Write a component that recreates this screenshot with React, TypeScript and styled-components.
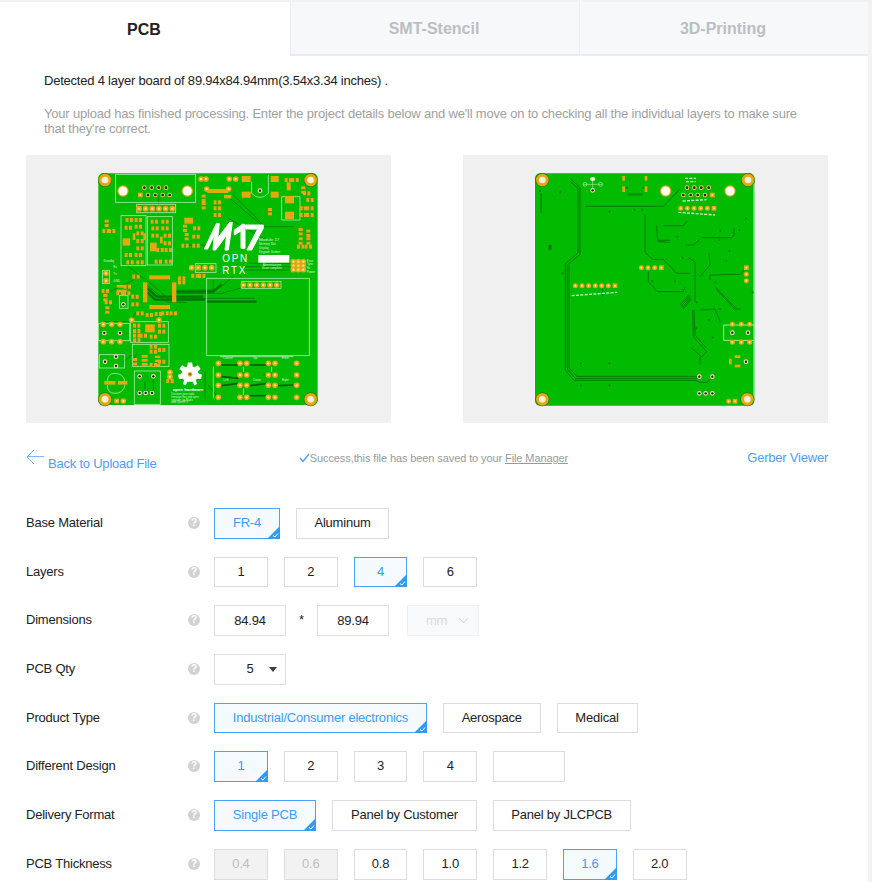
import React from "react";
import styled, { createGlobalStyle } from "styled-components";

const Global = createGlobalStyle`
  html, body { margin: 0; padding: 0; background: #f0f2f5; }
  body { font-family: "Liberation Sans", Arial, sans-serif; font-size: 13px; letter-spacing: -0.22px; color: #222; }
  * { box-sizing: border-box; }
`;

const Page = styled.div`
  width: 868px;
  height: 880px;
  margin-top: 2px;
  background: #fff;
  overflow: hidden;
`;
const Tabs = styled.div`
  display: flex;
  height: 54px;
`;
const Tab = styled.div<{ $active?: boolean; $w: number }>`
  width: ${(p) => p.$w}px;
  display: flex;
  align-items: center;
  justify-content: center;
  font-size: 16px;
  letter-spacing: 0;
  font-weight: 700;
  padding: 1px 2px 0 0;
  color: ${(p) => (p.$active ? "#222" : "#bbbec4")};
  background: ${(p) => (p.$active ? "#fff" : "#f6f8fa")};
  border-bottom: ${(p) => (p.$active ? "none" : "2px solid #e9ecef")};
  border-left: ${(p) => (p.$active ? "none" : "1px solid #eceef1")};
`;
const Intro = styled.div`
  padding: 17px 60px 0 44px;
`;
const Detected = styled.div`
  line-height: 16px;
  color: #222;
`;
const Note = styled.div`
  margin-top: 17px;
  line-height: 15px;
  letter-spacing: -0.195px;
  color: #a0a0a0;
`;
const Boards = styled.div`
  display: flex;
  justify-content: space-between;
  width: 802px;
  margin: 19px 0 0 26px;
`;
const BoardPanel = styled.div`
  width: 365px;
  height: 268px;
  background: #f0f0f0;
  display: flex;
  justify-content: center;
  align-items: flex-start;
`;
const BoardSvg = styled.svg<{ $shift: number }>`
  width: 235px;
  height: 245px;
  margin-top: 10px;
  margin-left: ${(p) => p.$shift}px;
  display: block;
  letter-spacing: 0;
`;
const Links = styled.div`
  display: flex;
  justify-content: space-between;
  align-items: flex-start;
  width: 802px;
  margin: 26px 0 0 26px;
  height: 59px;
`;
const BackLink = styled.div`
  display: flex;
  align-items: flex-start;
  gap: 4px;
  color: #4c9df3;
  line-height: 16px;
`;
const BackText = styled.span`
  margin-top: 7px;
`;
const Saved = styled.div`
  display: flex;
  align-items: center;
  margin: 2px 37px 0 0;
  font-size: 11px;
  letter-spacing: -0.1px;
  line-height: 14px;
  color: #999;
  white-space: pre;
`;
const FileLink = styled.span`
  text-decoration: underline;
`;
const Gerber = styled.div`
  margin-top: 1px;
  color: #4c9df3;
  line-height: 16px;
`;
const Form = styled.div`
  display: flex;
  flex-direction: column;
  gap: 18px;
  padding-left: 26px;
`;
const Row = styled.div`
  display: flex;
  align-items: flex-start;
  height: 30.7px;
`;
const Label = styled.div`
  width: 162px;
  line-height: 29px;
  color: #222;
`;
const Help = styled.div`
  width: 12px;
  height: 12px;
  margin: 9px 14px 0 0;
  border-radius: 50%;
  background: #d2d2d2;
  color: #fff;
  font-size: 10px;
  font-weight: 700;
  line-height: 12px;
  text-align: center;
  flex: none;
`;
const Options = styled.div`
  display: flex;
  gap: 16px;
  align-items: flex-start;
`;
const Option = styled.div<{ $w: number; $on?: boolean; $off?: boolean }>`
  position: relative;
  width: ${(p) => p.$w}px;
  height: 30.7px;
  display: flex;
  align-items: center;
  justify-content: center;
  padding-bottom: 2px;
  border: 1px solid ${(p) => (p.$on ? "#4aa3f8" : "#dcdcdc")};
  background: ${(p) => (p.$on ? "#f5faff" : p.$off ? "#f2f2f2" : "#fff")};
  color: ${(p) => (p.$on ? "#3a9df5" : p.$off ? "#bdbdbd" : "#222")};
`;
const Corner = styled.svg`
  position: absolute;
  right: -1px;
  bottom: -1px;
  width: 13px;
  height: 13px;
`;
const Field = styled.div`
  width: 72px;
  height: 30.7px;
  display: flex;
  align-items: center;
  justify-content: center;
  border: 1px solid #dcdfe6;
  color: #222;
`;
const Times = styled.div`
  width: 0;
  flex: none;
  margin-left: -3px;
  margin-right: 2px;
  padding-top: 7px;
  line-height: 16px;
  white-space: nowrap;
`;
const UnitSelect = styled.div`
  width: 72px;
  height: 30.7px;
  margin-left: 2px;
  display: flex;
  align-items: center;
  justify-content: space-between;
  padding: 0 9px 0 18px;
  background: #f8f9fb;
  border: 1px solid #eef0f3;
  color: #d8dade;
`;
const QtySelect = styled.div`
  position: relative;
  width: 72px;
  height: 30.7px;
  display: flex;
  align-items: center;
  justify-content: center;
  padding: 0 0 2px 0;
  border: 1px solid #dcdfe6;
  color: #222;
`;
const Caret = styled.div`
  position: absolute;
  right: 8px;
  top: 12px;
  width: 0;
  height: 0;
  border-left: 4px solid transparent;
  border-right: 4px solid transparent;
  border-top: 5px solid #3c3f4a;
`;

const SILK = "#a6eaa6";
const GOLD = "#e4a90f";
const TRACE = "#008a00";
const GREEN = "#00bb00";

type P = [number, number];
const Pad = ({ x, y, r = 8.5, dark }: { x: number; y: number; r?: number; dark?: boolean }) => (
  <g>
    <circle cx={x} cy={y} r={r} fill={GOLD} />
    <circle cx={x} cy={y} r={r * 0.42} fill={dark ? "#6d5200" : "#f3dfa0"} />
  </g>
);
const SqPad = ({ x, y, s = 14 }: { x: number; y: number; s?: number }) => (
  <g>
    <rect x={x - s / 2} y={y - s / 2} width={s} height={s} fill={GOLD} />
    <circle cx={x} cy={y} r={3} fill="#f3dfa0" />
  </g>
);
const Mount = ({ x, y }: { x: number; y: number }) => (
  <g>
    <circle cx={x} cy={y} r={21} fill="#1c7a10" />
    <circle cx={x} cy={y} r={19} fill={GOLD} />
    <circle cx={x} cy={y} r={10} fill="#f4f0dc" />
  </g>
);
const WhiteHole = ({ x, y, r = 17 }: { x: number; y: number; r?: number }) => (
  <g>
    <circle cx={x} cy={y} r={r} fill={GOLD} />
    <circle cx={x} cy={y} r={r - 3.5} fill="#fffdf5" />
  </g>
);
const Dot = ({ x, y }: { x: number; y: number }) => (
  <g>
    <circle cx={x} cy={y} r={7} fill="#f2c860" />
    <circle cx={x} cy={y} r={4} fill="#222" />
  </g>
);
const WDot = ({ x, y }: { x: number; y: number }) => (
  <g>
    <circle cx={x} cy={y} r={7} fill="#f2e2b0" />
    <circle cx={x} cy={y} r={3.5} fill="#1b1b1b" />
  </g>
);
const Traces = ({ lines, w = 2.5, c = TRACE }: { lines: string[]; w?: number; c?: string }) => (
  <g fill="none" stroke={c} strokeWidth={w}>
    {lines.map((d, i) => (
      <path key={i} d={d} />
    ))}
  </g>
);
const Silk = ({ rects }: { rects: number[][] }) => (
  <g fill="none" stroke={SILK} strokeWidth={2.5}>
    {rects.map((r, i) => (
      <rect key={i} x={r[0]} y={r[1]} width={r[2]} height={r[3]} />
    ))}
  </g>
);
const Bars = ({ items }: { items: number[][] }) => (
  <g fill={GOLD}>
    {items.map((r, i) => (
      <rect key={i} x={r[0]} y={r[1]} width={r[2]} height={r[3]} />
    ))}
  </g>
);
const Tiny = ({ items }: { items: [number, number, string, number?][] }) => (
  <g fill="#d9f7d9" fontFamily="Liberation Sans, sans-serif" fontSize={9}>
    {items.map((t, i) => (
      <text key={i} x={t[0]} y={t[1]} fontSize={t[3] ?? 9}>
        {t[2]}
      </text>
    ))}
  </g>
);
const Smd = ({ x, y, v }: { x: number; y: number; v?: boolean }) => (
  <g fill={GOLD}>
    {v ? (
      <>
        <rect x={x - 6} y={y - 11} width={12} height={9} />
        <rect x={x - 6} y={y + 2} width={12} height={9} />
        <rect x={x - 3} y={y - 2} width={6} height={4} fill="#7a7a40" />
      </>
    ) : (
      <>
        <rect x={x - 11} y={y - 6} width={9} height={12} />
        <rect x={x + 2} y={y - 6} width={9} height={12} />
        <rect x={x - 2} y={y - 3} width={4} height={6} fill="#7a7a40" />
      </>
    )}
  </g>
);

const gearPoints = (cx: number, cy: number, outer: number, inner: number, teeth: number) => {
  const out: string[] = [];
  for (let i = 0; i < teeth; i++) {
    const a = (i / teeth) * Math.PI * 2 - Math.PI / 2;
    const s = (Math.PI * 2) / teeth;
    [[-0.38, inner], [-0.2, outer], [0.2, outer], [0.38, inner]].forEach(([k, r]) => {
      out.push(`${cx + Math.cos(a + k * s) * r},${cy + Math.sin(a + k * s) * r}`);
    });
  }
  return out.join(" ");
};

const pads: P[] = [
  [147, 131], [167, 131], [187, 131], [207, 131], [227, 131], [247, 131],
  [348, 42], [418, 42], [437, 42], [333, 42], [350, 72], [416, 72],
  [305, 308], [325, 308], [345, 308], [365, 308],
  [460, 360], [480, 360], [500, 360], [520, 360], [540, 360], [560, 360],
  [48, 325], [48, 347], [125, 465], [207, 465],
  [385, 595], [450, 595], [470, 595], [535, 595], [555, 595], [620, 595],
  [385, 630], [450, 630], [470, 630], [535, 630], [555, 630], [620, 630],
  [385, 661], [450, 661], [470, 661], [535, 661], [555, 661], [620, 661],
  [385, 697], [450, 697], [470, 697], [535, 697], [555, 697], [620, 697],
  [40, 478], [65, 478], [90, 478], [40, 530], [65, 530], [90, 530],
  [100, 708], [240, 622], [240, 635],
  [610, 290], [610, 302], [610, 314], [625, 290], [625, 302], [625, 314],
  [640, 290], [640, 302], [640, 314],
];
const smds: [number, number, boolean?][] = [
  [118, 165], [145, 165], [115, 188], [145, 185], [150, 205], [150, 228], [150, 250], [115, 270], [145, 270], [150, 292], [120, 292],
  [193, 170], [225, 170], [195, 190], [225, 190], [195, 212], [232, 212], [232, 235], [210, 255], [235, 255], [205, 290], [235, 290],
  [50, 175, true], [48, 198], [65, 198], [285, 190, true], [320, 190], [290, 215, true], [318, 215], [318, 242], [285, 242],
  [632, 200, true], [655, 205, true], [632, 228, true], [655, 228, true], [632, 245], [655, 245], [650, 85], [660, 105], [640, 130], [660, 130], [640, 150], [660, 150],
  [382, 112], [382, 130], [382, 150], [341, 100, true], [341, 122, true], [615, 45], [595, 45], [640, 75, true],
  [46, 378], [46, 398, true], [55, 412], [52, 435, true], [112, 365], [90, 385], [110, 385], [135, 395], [135, 418], [138, 335], [275, 340], [275, 352],
  [150, 445], [178, 450], [225, 445], [250, 445], [205, 447], [315, 333], [335, 333],
  [140, 482], [140, 498], [140, 512], [140, 526], [160, 512], [190, 515], [215, 482], [215, 500], [190, 545], [190, 560], [215, 555], [190, 600], [215, 590], [135, 590, true],
  [240, 648], [540, 140, true],
];
const topBars: number[][] = [
  [178, 331, 62, 12], [159, 352, 13, 60], [246, 352, 13, 60], [178, 420, 62, 12],
  [352, 72, 62, 12], [455, 33, 27, 18], [542, 33, 24, 18], [455, 80, 27, 18], [542, 80, 24, 18],
  [585, 93, 27, 22], [585, 140, 27, 22], [590, 52, 12, 24], [630, 125, 26, 8],
  [98, 220, 22, 22], [180, 233, 20, 26], [283, 158, 26, 18], [166, 478, 28, 24],
  [43, 648, 33, 11], [84, 648, 28, 11], [155, 570, 18, 8], [155, 582, 18, 8], [155, 594, 18, 8],
  [195, 572, 16, 7], [195, 584, 16, 7], [195, 596, 16, 7], [402, 90, 22, 10],
  [128, 205, 8, 20], [160, 205, 8, 20], [210, 215, 8, 20], [80, 360, 30, 8], [80, 374, 30, 8],
];
const TopBoard = () => (
  <BoardSvg viewBox="0 0 705 735" $shift={-2} role="img" aria-label="PCB top layer">
    <rect x={25} y={25} width={658} height={695} rx={15} fill={GREEN} />
    <Traces
      w={3}
      lines={[
        "M420 100 L520 185 L610 185", "M170 345 L240 405 L300 405", "M170 360 L232 412 L290 412",
        "M260 375 L380 375 L430 335", "M260 385 L395 385 L450 370", "M260 400 L495 400", "M370 345 L370 380",
        "M290 240 L350 240 L375 200", "M40 470 L120 470", "M125 600 L140 565", "M345 620 L345 700",
        "M478 295 L610 295", "M465 305 L610 305", "M465 315 L610 315", "M165 650 L165 680", "M190 630 L190 680",
        "M520 630 L545 630", "M355 660 L385 700", "M415 160 L520 220", "M205 90 L205 120", "M430 90 L520 180",
        "M110 300 L160 340", "M60 380 L130 345", "M120 470 L140 440", "M100 590 L125 570", "M240 460 L260 430",
      ]}
    />
    <Traces
      w={7}
      c="#007600"
      lines={["M172 370 L200 395 L340 395", "M172 382 L195 404 L345 404", "M250 380 L370 380 L395 358", "M350 410 L500 410"]}
    />
    <Traces
      w={5}
      c="#0a5a0a"
      lines={["M395 600 L445 600", "M480 600 L530 600", "M395 635 L445 640", "M395 662 L445 655", "M480 662 L530 655", "M565 662 L610 660", "M480 692 L530 692"]}
    />
    <Silk
      rects={[
        [77, 28, 240, 84], [140, 118, 117, 25], [93, 152, 75, 150], [172, 155, 75, 145], [316, 296, 62, 26],
        [350, 340, 308, 232], [455, 349, 118, 21], [25, 475, 94, 52], [122, 470, 113, 62], [127, 538, 110, 66],
        [28, 569, 76, 40], [133, 618, 78, 100], [38, 316, 20, 40], [88, 392, 26, 38],
      ]}
    />
    <g fill="none" stroke={SILK} strokeWidth={2.5}>
      <path d="M52 650 Q52 625 75 625 Q100 625 105 650 M52 660 Q52 685 75 685 Q100 685 105 660" />
      <path d="M485 50 L485 85 Q510 110 535 85 L535 30" />
      <path d="M575 95 L630 95 L630 165 L575 165 Z" />
      <path d="M390 575 L610 575 M370 605 L370 700 M460 605 L460 620 M545 605 L545 620 M460 670 L460 690" />
    </g>
    <Bars items={topBars} />
    {smds.map((s, i) => (
      <Smd key={i} x={s[0]} y={s[1]} v={s[2]} />
    ))}
    {pads.map((p, i) => (
      <Pad key={i} x={p[0]} y={p[1]} />
    ))}
    <SqPad x={147} y={131} />
    <SqPad x={151} y={90} />
    <SqPad x={325} y={308} />
    <SqPad x={80} y={708} />
    <Dot x={174} y={90} /><Dot x={196} y={90} /><Dot x={218} y={90} /><Dot x={239} y={90} />
    <Dot x={163} y={68} /><Dot x={185} y={68} /><Dot x={206} y={68} /><Dot x={228} y={68} />
    <WhiteHole x={99} y={78} /><WhiteHole x={292} y={78} />
    <WDot x={43} y={504} /><WDot x={90} y={504} /><WDot x={149} y={684} /><WDot x={167} y={684} /><WDot x={186} y={684} />
    <WDot x={149} y={634} /><WDot x={190} y={634} /><WDot x={45} y={590} /><WDot x={78} y={575} /><WDot x={78} y={603} />
    <WDot x={510} y={77} /><WDot x={100} y={418} />
    <Mount x={45} y={45} /><Mount x={662} y={45} /><Mount x={45} y={703} /><Mount x={662} y={703} />
    <g transform="translate(315 150)" fill="#fff" stroke="#fff" strokeWidth={3}>
      <polygon points="28,102 64,26 73,26 68,70 104,22 112,22 100,105 90,105 95,60 62,105 54,105 58,60 38,102" />
      <polygon points="118,45 142,28 150,28 150,100 138,100 138,48 118,60" />
      <polygon points="152,30 205,30 205,40 170,105 156,105 188,42 152,42" />
    </g>
    <g fill="#fff" fontFamily="Liberation Sans, sans-serif" fontSize={30} letterSpacing={5}>
      <text x={397} y={290}>OPN</text>
      <text x={397} y={327}>RTX</text>
    </g>
    <rect x={505} y={270} width={93} height={23} fill="#fff" />
    <Tiny
      items={[
        [507, 229, "Module 17", 13],
        [507, 241, "Memory Slot"],
        [507, 251, "Display"],
        [507, 263, "Keypad: Sieben"],
        [518, 303, "Alimentazione"],
        [516, 312, "Scan complete"],
        [650, 290, "Error"],
        [650, 301, "Sync"],
        [650, 313, "Rx"],
        [650, 325, "Power"],
        [400, 581, "Cancel"],
        [490, 581, "Up"],
        [575, 581, "Enter"],
        [400, 649, "Left"],
        [490, 649, "Down"],
        [575, 649, "Right"],
        [40, 290, "Standby"],
        [70, 310, "Rx"],
        [70, 330, "Tx"],
        [70, 350, "GND"],
        [244, 689, "Discover your radio", 8],
        [244, 698, "firmware free and open", 8],
        [244, 707, "upgrade via Radio", 8],
        [244, 715, "and OpenRTX", 8],
      ]}
    />
    <polygon points={gearPoints(300, 628, 36, 25, 7)} fill="#fff" />
    <circle cx={300} cy={628} r={22} fill="#fff" />
    <polygon points="292,650 308,650 316,668 284,668" fill={GREEN} />
    <circle cx={300} cy={628} r={7} fill={GOLD} />
    <circle cx={300} cy={628} r={3} fill="#7a5a00" />
    <text x={248} y={677} fill="#fff" fontSize={13} fontWeight={700} fontFamily="Liberation Sans, sans-serif">open hardware</text>
  </BoardSvg>
);

const backGold: P[] = [
  [136, 362], [156, 362], [176, 362], [196, 362], [215, 362], [235, 362],
  [334, 308], [354, 308], [374, 308], [452, 130], [472, 130], [492, 130], [512, 130], [532, 130],
  [649, 328], [649, 347], [607, 478], [634, 478], [659, 478], [607, 532], [634, 532], [659, 532], [596, 709],
];
const vias: P[] = [
  [90, 82], [238, 140], [314, 134], [337, 134], [98, 325], [648, 160], [571, 198], [568, 225],
  [598, 258], [588, 288], [435, 348], [367, 348], [555, 352], [668, 382], [537, 465], [498, 490], [153, 595], [238, 595],
  [153, 661], [238, 661], [548, 518], [570, 432], [628, 195], [458, 278], [500, 412], [442, 215], [30, 78], [290, 68], [340, 68],
];
const BackBoard = () => (
  <BoardSvg viewBox="0 0 705 735" $shift={4} role="img" aria-label="PCB bottom layer">
    <rect x={15} y={25} width={658} height={697} rx={15} fill={GREEN} />
    <rect x={670} y={45} width={3} height={660} fill="#8fe08f" />
    <Traces
      w={2.5}
      c="#006f00"
      lines={[
        "M122 42 L150 68 L150 268 L112 300 L112 612 L135 640 L505 640",
        "M120 48 L144 70 L144 264 L106 296 L106 616 L132 646 L495 646 L512 652 L532 652 L547 635",
        "M117 300 L117 608 L140 634 L505 634",
        "M165 124 L400 124 L450 72",
        "M345 150 L345 262 L368 283 L400 283 L440 325 L480 325",
        "M355 320 L355 350 L383 380 L460 380 L465 365",
        "M400 182 L460 182 L472 168",
        "M380 182 L382 215 L385 230 L420 232", "M385 226 L420 226",
        "M515 218 L605 218 L612 210 L612 190",
        "M465 240 L490 240 L508 225",
        "M475 278 L495 290 L495 410",
        "M510 335 L540 300 L537 265",
        "M540 330 L630 328 L648 308",
        "M540 345 L540 330",
        "M555 365 L620 432 L632 432",
        "M558 372 L618 436",
        "M488 435 L490 515 L530 560 L515 575 L482 547",
        "M492 435 L495 510 L528 548",
        "M510 435 L555 432 L570 470",
        "M450 420 L478 390 M453 424 L480 394 M456 428 L482 398 M459 432 L484 402",
        "M33 85 L33 145", "M218 370 L218 395", "M510 575 L510 600",
      ]}
    />
    <rect x={293} y={85} width={45} height={7} fill="#009400" />
    <rect x={56} y={240} width={8} height={14} fill="#0a6a0a" />
    <g fill="none" stroke={SILK} strokeWidth={3}>
      <path d="M673 480 L581 480 L581 526 L673 526" />
    </g>
    <g fill="none" stroke={SILK} strokeWidth={2}>
      <path d="M160 58 L216 58 M188 42 L188 72" />
      <circle cx={165} cy={58} r={6} />
      <circle cx={212} cy={58} r={6} />
    </g>
    <ellipse cx={188} cy={42} rx={8} ry={6} fill="#e8f8d8" />
    {backGold.map((p, i) => (
      <Pad key={i} x={p[0]} y={p[1]} r={7.5} />
    ))}
    <SqPad x={255} y={362} s={14} /><SqPad x={394} y={308} s={14} /><SqPad x={552} y={130} s={14} />
    <SqPad x={547} y={90} s={14} /><SqPad x={649} y={308} s={14} /><SqPad x={615} y={709} s={14} />
    <Bars items={[[277, 33, 8, 14], [344, 33, 8, 14], [277, 64, 8, 17], [344, 64, 8, 17], [614, 571, 17, 8], [597, 581, 8, 17], [614, 599, 17, 8]]} />
    <Dot x={460} y={90} /><Dot x={482} y={90} /><Dot x={503} y={90} /><Dot x={525} y={90} />
    <Dot x={471} y={68} /><Dot x={493} y={68} /><Dot x={514} y={68} /><Dot x={536} y={68} />
    <WDot x={607} y={503} /><WDot x={654} y={503} /><WDot x={508} y={635} /><WDot x={547} y={635} />
    <WDot x={508} y={685} /><WDot x={527} y={685} /><WDot x={547} y={685} /><WDot x={188} y={76} /><WDot x={648} y={590} />
    <WhiteHole x={407} y={78} /><WhiteHole x={600} y={78} />
    <Mount x={37} y={45} /><Mount x={654} y={45} /><Mount x={37} y={703} /><Mount x={652} y={703} />
    <g fill="#0c7a0c">
      {vias.map((p, i) => (
        <circle key={i} cx={p[0]} cy={p[1]} r={3} />
      ))}
    </g>
    <g stroke="#c8f2c8" strokeWidth={4} fill="none" strokeDasharray="9 4">
      <path d="M125 392 L262 382" />
      <path d="M445 142 L555 150" />
      <path d="M458 108 L530 104" />
      <path d="M465 40 L498 40 M468 50 L498 50" />
    </g>
  </BoardSvg>
);

type Opt = { t: string; w: number; on?: boolean; off?: boolean };
const Check = () => (
  <Corner viewBox="0 0 13 13" aria-hidden="true">
    <polygon points="13,0 13,13 0,13" fill="#2f9bf4" />
    <path d="M6 9.5 L8 11 L11 7.5" stroke="#fff" strokeWidth={1} fill="none" />
  </Corner>
);
const Choices = ({ items }: { items: Opt[] }) => (
  <Options>
    {items.map((o, i) => (
      <Option key={i} $w={o.w} $on={o.on} $off={o.off}>
        {o.t}
        {o.on && <Check />}
      </Option>
    ))}
  </Options>
);
const Line = ({ label, children }: { label: string; children: React.ReactNode }) => (
  <Row>
    <Label>{label}</Label>
    <Help>?</Help>
    {children}
  </Row>
);
const N = 53.8;

export default function App() {
  return (
    <Page>
      <Global />
      <Tabs>
        <Tab $active $w={290}>PCB</Tab>
        <Tab $w={289}>SMT-Stencil</Tab>
        <Tab $w={289}>3D-Printing</Tab>
      </Tabs>
      <Intro>
        <Detected>Detected 4 layer board of 89.94x84.94mm(3.54x3.34 inches) .</Detected>
        <Note>
          Your upload has finished processing. Enter the project details below and we'll move on to checking all the
          individual layers to make sure that they're correct.
        </Note>
      </Intro>
      <Boards>
        <BoardPanel><TopBoard /></BoardPanel>
        <BoardPanel><BackBoard /></BoardPanel>
      </Boards>
      <Links>
        <BackLink>
          <svg width="18" height="16" viewBox="0 0 18 16" aria-hidden="true">
            <path d="M8 1 L1 8 L8 15 M1 7.5 L18 7.5" stroke="#7db9f5" strokeWidth="1" fill="none" />
          </svg>
          <BackText>Back to Upload File</BackText>
        </BackLink>
        <Saved>
          <svg width="11" height="10" viewBox="0 0 11 10" aria-hidden="true">
            <path d="M1 5 L4 8.5 L10 1" stroke="#4c9df3" strokeWidth="1.4" fill="none" />
          </svg>
          Success,this file has been saved to your <FileLink>File Manager</FileLink>
        </Saved>
        <Gerber>Gerber Viewer</Gerber>
      </Links>
      <Form>
        <Line label="Base Material">
          <Choices items={[{ t: "FR-4", w: 66, on: true }, { t: "Aluminum", w: 93 }]} />
        </Line>
        <Line label="Layers">
          <Choices items={[{ t: "1", w: N }, { t: "2", w: N }, { t: "4", w: N, on: true }, { t: "6", w: N }]} />
        </Line>
        <Line label="Dimensions">
          <Options>
            <Field>84.94</Field>
            <Times>*</Times>
            <Field>89.94</Field>
            <UnitSelect>
              mm
              <svg width="11" height="7" viewBox="0 0 11 7" aria-hidden="true">
                <path d="M1 1 L5.5 6 L10 1" stroke="#d0d3d8" fill="none" />
              </svg>
            </UnitSelect>
          </Options>
        </Line>
        <Line label="PCB Qty">
          <QtySelect>5<Caret /></QtySelect>
        </Line>
        <Line label="Product Type">
          <Choices items={[{ t: "Industrial/Consumer electronics", w: 213, on: true }, { t: "Aerospace", w: 97.5 }, { t: "Medical", w: 81 }]} />
        </Line>
        <Line label="Different Design">
          <Choices items={[{ t: "1", w: N, on: true }, { t: "2", w: N }, { t: "3", w: N }, { t: "4", w: N }, { t: "", w: 72 }]} />
        </Line>
        <Line label="Delivery Format">
          <Choices items={[{ t: "Single PCB", w: 102, on: true }, { t: "Panel by Customer", w: 144.7 }, { t: "Panel by JLCPCB", w: 138 }]} />
        </Line>
        <Line label="PCB Thickness">
          <Choices
            items={[
              { t: "0.4", w: N, off: true }, { t: "0.6", w: N, off: true }, { t: "0.8", w: N }, { t: "1.0", w: N },
              { t: "1.2", w: N }, { t: "1.6", w: N, on: true }, { t: "2.0", w: N },
            ]}
          />
        </Line>
      </Form>
    </Page>
  );
}
